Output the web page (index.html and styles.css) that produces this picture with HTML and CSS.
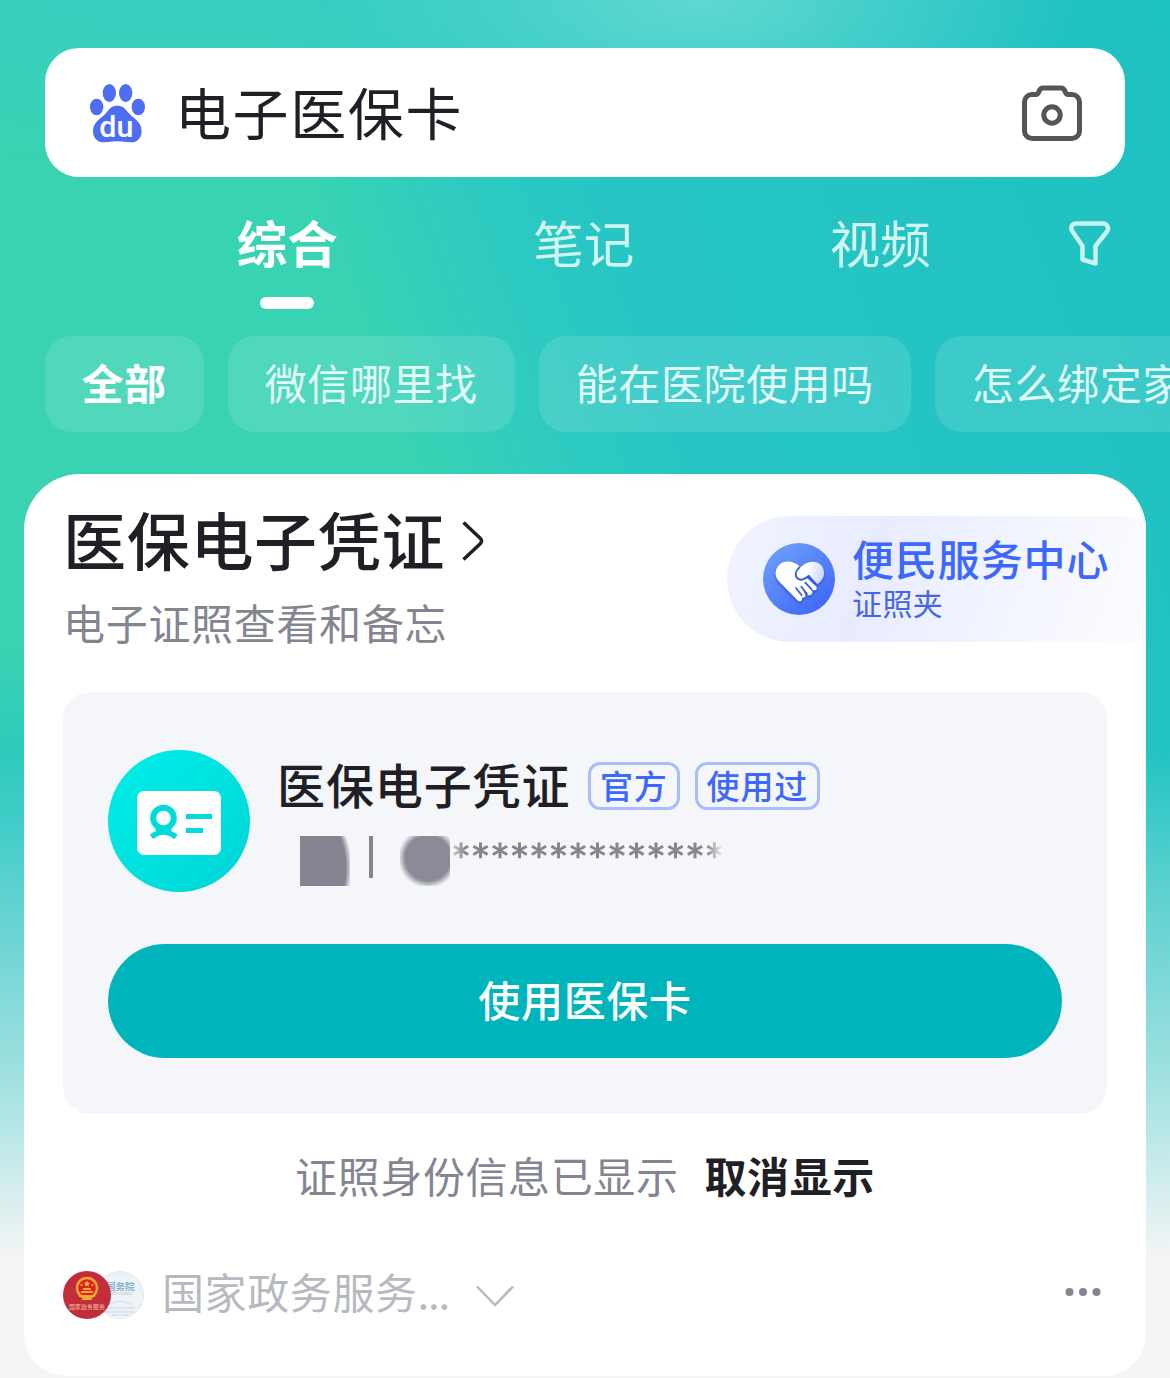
FILE: index.html
```html
<!DOCTYPE html>
<html lang="zh-CN">
<head>
  <meta charset="UTF-8">
  <title>电子医保卡</title>
  <link rel="stylesheet" href="styles.css">
</head>
<body>
  <div class="page">
    <header class="search-box">
      <svg class="logo" viewBox="147 127 171 180">
        <g fill="#4e6ef2">
          <ellipse cx="170" cy="199" rx="20" ry="25"/>
          <ellipse cx="208" cy="157" rx="20" ry="27"/>
          <ellipse cx="257" cy="157" rx="20" ry="27"/>
          <ellipse cx="295" cy="199" rx="20" ry="25"/>
          <path d="M232 195C247 195 256 203 264 215C274 230 305 242 305 270C305 292 292 305 272 305C258 305 248 302 232 302C216 302 207 305 193 305C172 305 159 292 159 270C159 242 190 230 200 215C208 203 217 195 232 195Z"/>
        </g>
        <text class="logo-text" x="178" y="289" textLength="102" lengthAdjust="spacingAndGlyphs">du</text>
      </svg>
      <span class="query">电子医保卡</span>
      <svg class="camera" viewBox="0 0 60 56" fill="none" stroke="#555" stroke-width="5">
        <path d="M10 9.500H14C17.500 9.500 16 3 21 3H39C44 3 42.500 9.500 46 9.500H50A7.500 7.500 0 0 1 57.500 17V46A7.500 7.500 0 0 1 50 53.500H10A7.500 7.500 0 0 1 2.500 46V17A7.500 7.500 0 0 1 10 9.500Z"/>
        <circle cx="30" cy="30" r="8.200"/>
      </svg>
    </header>

    <nav class="tabs">
      <div class="tab active">综合</div>
      <div class="tab">笔记</div>
      <div class="tab">视频</div>
      <svg class="filter" viewBox="0 0 42 46" fill="none" stroke="#c9f3f1" stroke-width="4.500" stroke-linejoin="round">
        <path d="M7 2.500H34C38 2.500 40.500 7 38 10.500L26.500 25V42.500L13.500 38.500V25L3.500 10.500C1 7 3 2.500 7 2.500Z"/>
      </svg>
    </nav>

    <div class="chips">
      <span class="chip selected">全部</span>
      <span class="chip">微信哪里找</span>
      <span class="chip">能在医院使用吗</span>
      <span class="chip">怎么绑定家人</span>
    </div>

    <main class="card">
      <div class="card-head">
        <div class="heading">
          <h1>医保电子凭证
            <svg class="arrow" viewBox="0 0 22 40" fill="none" stroke="#1f1f25" stroke-width="3.500" stroke-linejoin="round">
              <path d="M1.500 1.500L18.500 17.500Q20.500 20 18.500 22.500L1.500 38.500"/>
            </svg>
          </h1>
          <p>电子证照查看和备忘</p>
        </div>
        <div class="service">
          <svg class="service-icon" viewBox="129 129 216 216">
            <defs>
              <linearGradient id="blue" x1="0" y1="0" x2=".8" y2="1">
                <stop offset="0" stop-color="#72a5fb"/>
                <stop offset="1" stop-color="#3e66f6"/>
              </linearGradient>
              <linearGradient id="hand" x1="0" y1="0" x2="1" y2=".2">
                <stop offset="0" stop-color="#fff"/>
                <stop offset=".45" stop-color="#fff"/>
                <stop offset="1" stop-color="#cfdaff"/>
              </linearGradient>
              <filter id="shadow" x="-20%" y="-20%" width="140%" height="150%">
                <feDropShadow dx="0" dy="6" stdDeviation="5" flood-color="#1739b5" flood-opacity=".6"/>
              </filter>
            </defs>
            <circle cx="237" cy="237" r="108" fill="url(#blue)"/>
            <g filter="url(#shadow)">
              <path fill="#fff" d="M232 300L176 243C164 230 164 206 178 194C194 180 219 182 238 198C225 212 221 226 231 237C240 246 252 242 260 234L289 260C293 268 285 274 277 269L265 258L276 273C280 282 269 290 261 283L246 266L255 282C259 291 250 296 242 289L228 272L246 291C249 301 240 309 232 300Z"/>
              <path fill="url(#hand)" d="M238 205L253 193C268 182 291 183 303 195C315 208 315 230 303 242C297 250 290 254 287 248L267 224L250 236C240 241 228 233 229 220C230 213 233 209 238 205Z"/>
            </g>
            <path d="M238 203C225 214 224 228 233 235C241 242 253 238 266 228L288 252M244 260L261 281M256 248L275 268M228 264L245 286" fill="none" stroke="#3159d8" stroke-width="5" stroke-linecap="round" stroke-linejoin="round"/>
          </svg>
          <div>
            <div class="service-name">便民服务中心</div>
            <div class="service-sub">证照夹</div>
          </div>
        </div>
      </div>

      <section class="panel">
        <div class="cert">
          <div class="cert-icon">
            <svg viewBox="0 0 84 64">
              <rect width="84" height="64" rx="7" fill="#fff"/>
              <g fill="none" stroke="#00dada">
                <circle cx="26.500" cy="27" r="10.300" stroke-width="6"/>
                <path d="M14.500 46C22 39.500 31 39.500 39 46" stroke-width="5.500"/>
                <path d="M19 37.500L26.500 41L34 37.500" stroke-width="4"/>
                <path d="M49 25.500H75M49 39.500H66" stroke-width="5"/>
              </g>
            </svg>
          </div>
          <div class="cert-info">
            <div class="cert-title">
              <span class="cert-name">医保电子凭证</span>
              <span class="tag">官方</span>
              <span class="tag">使用过</span>
            </div>
            <div class="cert-id">
              <span class="mask mask-name"></span>
              <span class="divider"></span>
              <span class="mask mask-number"></span>
              <span class="stars">**************</span>
            </div>
          </div>
        </div>
        <a class="use-button">使用医保卡</a>
      </section>

      <div class="status">
        <span>证照身份信息已显示</span>
        <b>取消显示</b>
      </div>

      <footer class="source">
        <svg class="avatars" viewBox="0 0 81 48">
          <circle cx="57" cy="24" r="23.500" fill="#edf3f6" stroke="#e2e8eb"/>
          <text x="43" y="18.500" font-size="9.500" font-weight="bold" fill="#86b2d3">国务院</text>
          <text x="44" y="24" font-size="3.500" fill="#a9bac5">STATE COUNCIL</text>
          <path d="M46 33L57 30L68 33M43 37H72M40 41H71M49 44H66" stroke="#dbe6ec" stroke-width="2" fill="none"/>
          <circle cx="24" cy="24" r="24" fill="#c22c3b"/>
          <circle cx="24" cy="17" r="10" fill="#df1f24" stroke="#e9a637" stroke-width="2.500"/>
          <path d="M18 20H30V22H18ZM20 17H28V19H20ZM16 24H32V26H16ZM19 27.500H29V29H19Z" fill="#f2ad36"/>
          <path d="M24 9.500L25 11.500L27 12L25.500 13.500L26 15.500L24 14.500L22 15.500L22.500 13.500L21 12L23 11.500Z" fill="#f4bc3c"/>
          <circle cx="18.500" cy="14" r="1" fill="#f4bc3c"/>
          <circle cx="29.500" cy="14" r="1" fill="#f4bc3c"/>
          <text x="6" y="37.800" font-size="6" textLength="36" fill="#efc69c">国家政务服务</text>
        </svg>
        <span class="source-name">国家政务服务<span class="dots">...</span></span>
        <svg class="down" viewBox="0 0 38 22" fill="none" stroke="#b7b7bd" stroke-width="2.500">
          <path d="M1 1.500L19 20L37 1.500"/>
        </svg>
        <svg class="more" viewBox="0 0 36 10" fill="#858592">
          <circle cx="4.500" cy="5" r="4"/>
          <circle cx="18" cy="5" r="4"/>
          <circle cx="31.500" cy="5" r="4"/>
        </svg>
      </footer>
    </main>
  </div>
</body>
</html>
```
FILE: styles.css
```css
* {
  box-sizing: border-box;
}
body {
  margin: 0;
  background: #f5f5f5;
  font-family: "Noto Sans CJK SC", sans-serif;
  overflow: hidden;
}
svg {
  display: block;
  flex: none;
}
.page {
  width: 1170px;
  height: 1378px;
  padding-top: 48px;
  overflow: hidden;
  background:
    linear-gradient(to bottom, rgba(245, 245, 245, 0) 750px, rgba(245, 245, 245, .25) 880px, rgba(245, 245, 245, .6) 1080px, #f5f5f5 1260px),
    linear-gradient(to bottom, rgba(34, 196, 195, 0) 640px, rgba(34, 196, 195, .9) 820px, #22c4c3 900px),
    radial-gradient(ellipse 380px 160px at 700px 0, rgba(110, 220, 213, .8), rgba(110, 220, 213, 0)),
    radial-gradient(ellipse 700px 170px at 200px 0, rgba(55, 205, 198, .7), rgba(55, 205, 198, 0)),
    linear-gradient(70deg, #3cd3b1 0, #37d3b3 45%, #2fcbc0 53%, #27c6c4 61%, #1ec1c1 100%);
}
.search-box {
  display: flex;
  align-items: center;
  height: 129px;
  margin: 0 45px;
  padding: 0 43px 0 44px;
  background: #fff;
  border-radius: 34px;
}
.logo {
  width: 57px;
  height: 60px;
}
.logo-text {
  font: 500 88px Roboto, sans-serif;
  fill: #fff;
}
.query {
  flex: 1;
  height: 129px;
  margin-left: 29px;
  font-size: 56px;
  line-height: 125px;
  letter-spacing: 1.600px;
  color: #1f1f25;
}
.camera {
  width: 60px;
  height: 56px;
}
.tabs {
  display: flex;
  height: 132px;
  padding-left: 139px;
}
.tab {
  width: 296.500px;
  padding-top: 28px;
  font-size: 50.500px;
  line-height: 72px;
  text-align: center;
  color: #d0f5f1;
}
.tab.active {
  font-weight: bold;
  color: #fff;
}
.tab.active::after {
  content: "";
  display: block;
  width: 54px;
  height: 12px;
  margin: 20px auto 0;
  border-radius: 6px;
  background: #fff;
}
.filter {
  width: 42px;
  height: 46px;
  margin: 44px 0 0 40px;
}
.chips {
  display: flex;
  gap: 24px;
  margin-top: 27px;
  padding-left: 45px;
}
.chip {
  flex: none;
  height: 96px;
  padding: 0 37.500px 0 36.500px;
  border-radius: 27px;
  background: rgba(255, 255, 255, .12);
  font-size: 42px;
  line-height: 91px;
  letter-spacing: .6px;
  color: #e0f9f6;
}
.chip.selected {
  font-weight: bold;
  color: #fff;
}
.card {
  height: 902px;
  margin: 42px 24px 0;
  border-radius: 56px 56px 42px 42px;
  background: #fff;
  overflow: hidden;
}
.card-head {
  display: flex;
  justify-content: space-between;
  height: 218px;
  padding: 42px 0 0 39px;
}
h1 {
  display: flex;
  align-items: center;
  gap: 17px;
  margin: -18px 0 0;
  font-size: 63px;
  font-weight: 500;
  line-height: 80px;
  letter-spacing: .7px;
  color: #1f1f25;
}
.arrow {
  width: 22px;
  height: 40px;
  margin-top: 5px;
}
.heading p {
  margin: 14px 0 0;
  font-size: 42px;
  line-height: 60px;
  letter-spacing: .7px;
  color: #858592;
}
.service {
  display: flex;
  width: 419px;
  height: 126px;
  padding-left: 36px;
  border-radius: 63px 0 0 63px;
  background: linear-gradient(110deg, #f1f3fe, #e8ecfe 35%, #f2f4ff 65%, #fdfdff 100%);
}
.service-icon {
  width: 72px;
  height: 72px;
  margin: 27px 17px 0 0;
}
.service-name {
  margin-top: 14px;
  font-size: 42px;
  font-weight: 500;
  line-height: 55px;
  letter-spacing: .9px;
  color: #3c68ff;
}
.service-sub {
  font-size: 30px;
  line-height: 34px;
  letter-spacing: .4px;
  color: #4565e8;
}
.panel {
  height: 422px;
  margin: 0 39px;
  padding: 58px 45px 0;
  border-radius: 27px;
  background: #f4f6fa;
}
.cert {
  display: flex;
}
.cert-icon {
  display: flex;
  align-items: center;
  justify-content: center;
  width: 142px;
  height: 142px;
  border-radius: 50%;
  background: linear-gradient(135deg, #00efea, #00d4d6);
}
.cert-icon svg {
  width: 84px;
  height: 64px;
  margin-top: 4px;
}
.cert-info {
  margin-left: 27px;
}
.cert-title {
  display: flex;
  align-items: center;
  height: 72px;
}
.cert-name {
  width: 296px;
  margin: -7px 15px 0 0;
  font-size: 48px;
  font-weight: 500;
  letter-spacing: .9px;
  white-space: nowrap;
  color: #1f1f25;
}
.tag {
  height: 48px;
  margin-right: 15px;
  padding: 0 9px;
  border: 3px solid #a9bdfc;
  border-radius: 12px;
  font-size: 33px;
  font-weight: 500;
  line-height: 41px;
  letter-spacing: .8px;
  color: #3c68ff;
}
.cert-id {
  display: flex;
  height: 50px;
  margin: 14px 0 0 23px;
  color: #858592;
}
.mask {
  width: 50px;
  height: 50px;
}
.mask-name {
  background: radial-gradient(ellipse 52px 72px at 0 32px, #858592 88%, rgba(133, 133, 146, 0));
}
.divider {
  width: 4px;
  height: 42px;
  margin: 0 27px 0 19px;
  background: #858592;
}
.mask-number {
  background: radial-gradient(circle 30px at 28px 22px, #8a8b97 76%, rgba(138, 139, 151, 0));
}
.stars {
  margin-left: 3px;
  font-family: "DejaVu Sans", sans-serif;
  font-size: 32px;
  line-height: 38px;
  letter-spacing: 3.500px;
  -webkit-text-stroke: 1.200px #858592;
  -webkit-mask-image: linear-gradient(to right, rgba(0, 0, 0, .4), #000 12px, #000 254px, transparent 270px);
  mask-image: linear-gradient(to right, rgba(0, 0, 0, .4), #000 12px, #000 254px, transparent 270px);
}
.use-button {
  display: block;
  height: 114px;
  margin-top: 52px;
  border-radius: 57px;
  background: #00b4bb;
  font-size: 42px;
  font-weight: 500;
  line-height: 109px;
  letter-spacing: .7px;
  text-align: center;
  color: #fff;
}
.status {
  display: flex;
  justify-content: center;
  gap: 26px;
  margin-top: 31px;
  font-size: 42px;
  line-height: 60px;
  letter-spacing: .6px;
  color: #858592;
}
.status b {
  color: #1f1f25;
}
.source {
  display: flex;
  align-items: center;
  margin: 56px 45px 0 39px;
}
.avatars {
  width: 81px;
  height: 48px;
  margin-top: 7px;
}
.source-name {
  margin-left: 18px;
  font-size: 42px;
  line-height: 60px;
  letter-spacing: .6px;
  color: #b7b9c1;
}
.dots {
  letter-spacing: -1.200px;
}
.down {
  width: 38px;
  height: 22px;
  margin: 9px 0 0 27px;
}
.more {
  width: 36px;
  height: 10px;
  margin: 2px 0 0 auto;
}
```
